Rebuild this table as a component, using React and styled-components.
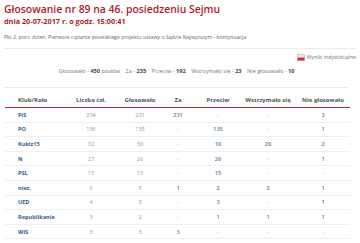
import React from 'react';
import styled, { createGlobalStyle } from 'styled-components';

const GlobalStyle = createGlobalStyle`
  html, body {
    margin: 0;
    padding: 0;
    background: #ffffff;
  }
  body {
    font-family: 'Open Sans', 'DejaVu Sans', sans-serif;
    color: #555;
  }
`;

const clubs = [
  { name: 'PiS', members: 234, voted: 231, za: '231', przeciw: '-', wstrz: '-', nie: '3' },
  { name: 'PO', members: 136, voted: 135, za: '-', przeciw: '135', wstrz: '-', nie: '1' },
  { name: 'Kukiz15', members: 32, voted: 30, za: '-', przeciw: '10', wstrz: '20', nie: '2' },
  { name: 'N', members: 27, voted: 26, za: '-', przeciw: '26', wstrz: '-', nie: '1' },
  { name: 'PSL', members: 15, voted: 15, za: '-', przeciw: '15', wstrz: '-', nie: '-' },
  { name: 'niez.', members: 6, voted: 5, za: '1', przeciw: '2', wstrz: '2', nie: '1' },
  { name: 'UED', members: 4, voted: 3, za: '-', przeciw: '3', wstrz: '-', nie: '1' },
  { name: 'Republikanie', members: 3, voted: 2, za: '-', przeciw: '1', wstrz: '1', nie: '1' },
  { name: 'WiS', members: 3, voted: 3, za: '3', przeciw: '-', wstrz: '-', nie: '-' },
];

const COLS = '57px 58px 40px 36px 44px 56px 54px';

function App() {
  return (
    <Page>
      <GlobalStyle />
      <Title>Głosowanie nr 89 na 46. posiedzeniu Sejmu</Title>
      <DateLine>dnia 20-07-2017 r. o godz. 15:00:41</DateLine>
      <Agenda>
        Pkt 2. porz. dzien. Pierwsze czytanie poselskiego projektu ustawy o Sądzie Najwyższym - kontynuacja
      </Agenda>
      <Divider />
      <LinkBar>
        <DocIcon width="8" height="7" viewBox="0 0 8 7">
          <rect x="0.5" y="0.5" width="7" height="6" fill="#fbe3e5" stroke="#d9a0a6" strokeWidth="0.6" />
          <rect x="0.5" y="3.6" width="7" height="2.9" fill="#d0303f" />
        </DocIcon>
        <span>Wyniki indywidualne</span>
      </LinkBar>
      <Summary>
        Głosowało - <b>450</b> posłów <Gap />Za - <b>235</b> <Gap />Przeciw - <b>192</b> <Gap />
        Wstrzymało się - <b>23</b> <Gap />Nie głosowało - <b>10</b>
      </Summary>
      <Table>
        <HeadRow>
          <HeadCell $left>Klub/Koło</HeadCell>
          <HeadCell>Liczba czł.</HeadCell>
          <HeadCell>Głosowało</HeadCell>
          <HeadCell>Za</HeadCell>
          <HeadCell>Przeciw</HeadCell>
          <HeadCell>Wstrzymało się</HeadCell>
          <HeadCell>Nie głosowało</HeadCell>
        </HeadRow>
        {clubs.map((c) => (
          <Row key={c.name}>
            <ClubCell>{c.name}</ClubCell>
            <Cell>{c.members}</Cell>
            <Cell>{c.voted}</Cell>
            <VoteCell $dash={c.za === '-'}>{c.za}</VoteCell>
            <VoteCell $dash={c.przeciw === '-'}>{c.przeciw}</VoteCell>
            <VoteCell $dash={c.wstrz === '-'}>{c.wstrz}</VoteCell>
            <VoteCell $dash={c.nie === '-'}>{c.nie}</VoteCell>
          </Row>
        ))}
      </Table>
    </Page>
  );
}

const Page = styled.div`
  width: 360px;
  height: 243px;
  overflow: hidden;
  padding: 3px 4px 0 4px;
  box-sizing: border-box;
`;

const Title = styled.h1`
  margin: 0;
  font-size: 10.4px;
  line-height: 13px;
  font-weight: 600;
  color: #ad1c2c;
  white-space: nowrap;
`;

const DateLine = styled.div`
  margin-top: 1px;
  font-size: 7.3px;
  line-height: 9px;
  font-weight: 700;
  color: #ad1c2c;
  white-space: nowrap;
`;

const Agenda = styled.div`
  margin-top: 7px;
  font-size: 5.2px;
  line-height: 8px;
  color: #666;
  white-space: nowrap;
`;

const Divider = styled.div`
  margin-top: 7px;
  height: 1px;
  background: #ececec;
`;

const LinkBar = styled.div`
  display: flex;
  justify-content: flex-end;
  align-items: center;
  gap: 2px;
  margin-top: 4px;
  font-size: 5.2px;
  line-height: 8px;
  color: #6a7a8a;
  white-space: nowrap;
`;

const DocIcon = styled.svg`
  display: block;
`;

const Summary = styled.div`
  width: 345px;
  margin-top: 6px;
  text-align: center;
  font-size: 5.6px;
  line-height: 8px;
  color: #777;
  white-space: nowrap;
  padding-bottom: 12px;
  border-bottom: 1px solid #ececec;
  b {
    color: #444;
    font-weight: 700;
  }
`;

const Gap = styled.span`
  display: inline-block;
  width: 4px;
`;

const Table = styled.div`
  width: 345px;
  margin-left: 1px;
  margin-top: 4px;
`;

const HeadRow = styled.div`
  display: grid;
  grid-template-columns: ${COLS};
  height: 15px;
  align-items: center;
  border-bottom: 1.2px solid #a32a33;
`;

const HeadCell = styled.div`
  display: flex;
  justify-content: ${(p) => (p.$left ? 'flex-start' : 'center')};
  padding-left: ${(p) => (p.$left ? '13px' : '0')};
  font-size: 6px;
  font-weight: 700;
  color: #555;
  white-space: nowrap;
`;

const Row = styled.div`
  display: grid;
  grid-template-columns: ${COLS};
  height: 13.6px;
  align-items: center;
  border-bottom: 1px solid #efefef;
  font-size: 5.6px;
  white-space: nowrap;
`;

const Cell = styled.div`
  display: flex;
  justify-content: center;
  color: #999;
`;

const ClubCell = styled.div`
  padding-left: 13px;
  font-weight: 700;
  color: #2f5f8f;
`;

const VoteCell = styled.div`
  display: flex;
  justify-content: center;
  font-weight: ${(p) => (p.$dash ? 400 : 600)};
  color: ${(p) => (p.$dash ? '#aaa' : '#4f79a3')};
`;

export default App;
